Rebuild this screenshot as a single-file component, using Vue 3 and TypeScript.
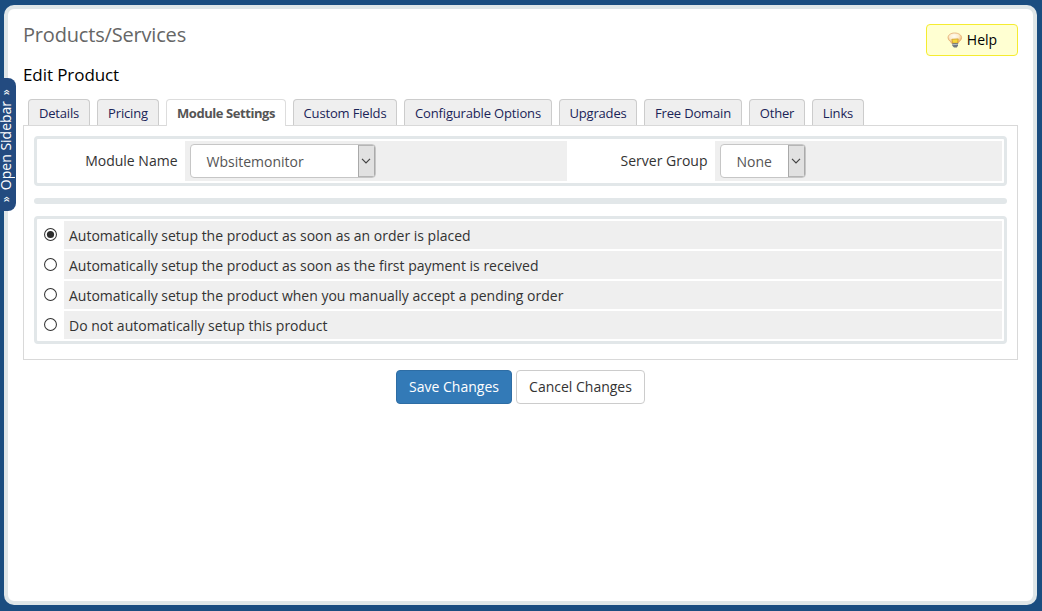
<script setup lang="ts">
import { ref } from 'vue'

interface Tab { label: string; width: number }

const tabs: Tab[] = [
  { label: 'Details', width: 62 },
  { label: 'Pricing', width: 62 },
  { label: 'Module Settings', width: 120 },
  { label: 'Custom Fields', width: 104 },
  { label: 'Configurable Options', width: 148 },
  { label: 'Upgrades', width: 78 },
  { label: 'Free Domain', width: 98 },
  { label: 'Other', width: 56 },
  { label: 'Links', width: 52 },
]
const activeTab = ref('Module Settings')

const setupOptions: string[] = [
  'Automatically setup the product as soon as an order is placed',
  'Automatically setup the product as soon as the first payment is received',
  'Automatically setup the product when you manually accept a pending order',
  'Do not automatically setup this product',
]
const selected = ref(0)
</script>

<template>
  <div class="page">
    <div class="sidebar-opener"><span class="opener-text"><i>»</i><em>Open Sidebar</em><i>»</i></span></div>
    <main class="content">
      <header class="head">
        <h1>Products/Services</h1>
        <button class="help" type="button">
          <svg width="16" height="16" viewBox="0 0 16 16">
            <defs>
              <radialGradient id="bulb" cx="0.45" cy="0.3" r="0.7">
                <stop offset="0" stop-color="#fffdf2" />
                <stop offset="0.5" stop-color="#fcebca" />
                <stop offset="1" stop-color="#e8a04a" />
              </radialGradient>
            </defs>
            <path d="M7.600 1C3.800 1 1 3 1 5.700c0 2.800 3 3.600 4 6h6c.6-2.400 3.600-3.200 3.600-6C14.600 3 11.600 1 7.600 1z" fill="url(#bulb)" stroke="#e3ad74" stroke-width=".8" />
            <path d="M4.800 7.300l6.400-.4-.6 4.300H5.800z" fill="#f5d93c" stroke="#cf9a2c" stroke-width=".8" />
            <path d="M5.300 11.300l5.700-.3v2.600L9.800 15.400H7L5.300 13.800z" fill="#6f777f" />
            <path d="M5.400 12.700l5.500-.4" stroke="#c9d0d6" stroke-width=".8" />
          </svg>
          <span>Help</span>
        </button>
      </header>
      <h2>Edit Product</h2>

      <nav class="tabs">
        <a
          v-for="tab in tabs"
          :key="tab.label"
          class="tab"
          :class="{ active: tab.label === activeTab }"
          :style="{ width: tab.width + 'px' }"
          @click="activeTab = tab.label"
        >{{ tab.label }}</a>
      </nav>

      <section class="panel">
        <div class="box module-row">
          <div class="label">Module Name</div>
          <div class="field">
            <div class="select wide">
              <span>Wbsitemonitor</span>
              <b><svg width="10" height="6" viewBox="0 0 10 6"><path d="M1 .8l4 4 4-4" /></svg></b>
            </div>
          </div>
          <div class="label">Server Group</div>
          <div class="field">
            <div class="select">
              <span>None</span>
              <b><svg width="10" height="6" viewBox="0 0 10 6"><path d="M1 .8l4 4 4-4" /></svg></b>
            </div>
          </div>
        </div>

        <div class="divider"></div>

        <div class="box options">
          <template v-for="(option, i) in setupOptions" :key="option">
            <div class="radio-cell" @click="selected = i">
              <svg width="13" height="13" viewBox="0 0 13 13">
                <circle cx="6.500" cy="6.500" r="5.950" fill="#fff" stroke="#333" stroke-width="1.050" />
                <circle v-if="selected === i" cx="6.500" cy="6.500" r="3.600" fill="#2b2b2b" />
              </svg>
            </div>
            <div class="option" @click="selected = i">{{ option }}</div>
          </template>
        </div>
      </section>

      <div class="actions">
        <button class="btn primary" type="button">Save Changes</button>
        <button class="btn" type="button">Cancel Changes</button>
      </div>
    </main>
  </div>
</template>

<style>
body {
  margin: 0;
  background: #1a4d80;
}
</style>

<style scoped>
.page {
  box-sizing: border-box;
  position: relative;
  height: 611px;
  padding: 5px 5px 6px 4px;
  background: #1a4d80;
  font-family: "Open Sans", "Noto Sans", sans-serif;
  font-size: 14px;
  color: #333;
}
.content {
  box-sizing: border-box;
  height: 600px;
  padding: 15px 15px 0;
  border: 4px solid #dfe6e8;
  border-radius: 10px;
  background: #fff;
}
.sidebar-opener {
  position: absolute;
  left: 0;
  top: 78px;
  width: 16px;
  height: 133px;
  border-radius: 0 8px 8px 0;
  background: #234b80;
  color: #fff;
  display: flex;
  justify-content: center;
  align-items: center;
}
.opener-text {
  display: flex;
  align-items: center;
  gap: 6px;
  writing-mode: vertical-rl;
  transform: rotate(180deg);
  white-space: nowrap;
  line-height: 16px;
  margin-right: 4px;
  margin-top: 2px;
}
.opener-text em {
  font-style: normal;
}
.opener-text i {
  font-style: normal;
  font-size: 12px;
  line-height: 12px;
}
.head {
  display: flex;
  justify-content: space-between;
  height: 40px;
}
h1 {
  margin: 0;
  font-size: 20px;
  font-weight: 400;
  line-height: 22px;
  letter-spacing: -0.180px;
  color: #666;
}
.help {
  box-sizing: border-box;
  width: 92px;
  height: 32px;
  padding: 0;
  border: 1px solid #f5ec30;
  border-radius: 4px;
  background: #ffffd2;
  font: inherit;
  color: #000;
  display: flex;
  align-items: center;
  justify-content: center;
  gap: 4px;
}
.help span {
  padding-bottom: 2px;
}
h2 {
  margin: 0;
  height: 35px;
  font-size: 17px;
  font-weight: 400;
  line-height: 22px;
  letter-spacing: -0.080px;
  color: #000;
}
.tabs {
  display: flex;
  gap: 7px;
  padding-left: 5px;
  height: 26px;
}
.tab {
  box-sizing: border-box;
  height: 26px;
  border: 1px solid #ccc;
  border-bottom: 0;
  border-radius: 4px 4px 0 0;
  background: #efefef;
  color: #1a2458;
  font-size: 13px;
  line-height: 27px;
  letter-spacing: -0.160px;
  text-align: center;
  white-space: nowrap;
}
.tab.active {
  position: relative;
  height: 27px;
  border-color: #ddd;
  background: #fff;
  color: #555;
  font-weight: 700;
  letter-spacing: -0.430px;
}
.panel {
  box-sizing: border-box;
  height: 235px;
  padding: 10px;
  border: 1px solid #d9d9d9;
}
.box {
  box-sizing: border-box;
  border: 3px solid #e2e7e9;
  border-radius: 4px;
  padding: 2px;
}
.module-row {
  display: grid;
  grid-template-columns: 146px 382px 148px 1fr;
  height: 50px;
}
.label {
  padding-right: 7.500px;
  text-align: right;
  line-height: 40px;
}
.field {
  display: flex;
  align-items: center;
  padding-left: 5px;
  background: #efefef;
}
.select {
  box-sizing: border-box;
  display: flex;
  justify-content: space-between;
  width: 86px;
  height: 34px;
  border: 1px solid #c6c6c6;
  border-radius: 4px;
  background: #fff;
  color: #555;
  overflow: hidden;
}
.select.wide {
  width: 186px;
}
.select span {
  padding-left: 15.500px;
  line-height: 33px;
}
.select b {
  box-sizing: border-box;
  width: 17px;
  padding: 0 2px 1px 0;
  border-left: 1px solid #a9a9a9;
  background: #e1e1e1;
  box-shadow: inset -1px 0 #aaa, inset 0 1px #b5b5b5, inset 0 -1px #b5b5b5;
  display: flex;
  align-items: center;
  justify-content: center;
}
.select path {
  fill: none;
  stroke: #444;
  stroke-width: 1.200;
}
.divider {
  height: 6px;
  margin: 12px 0;
  border-radius: 3px;
  background: #e2e7e9;
}
.options {
  display: grid;
  grid-template-columns: 23px 1fr;
  grid-template-rows: repeat(4, 28px);
  gap: 2px;
  height: 128px;
}
.radio-cell {
  padding: 7px 0 0 5px;
}
.radio-cell svg {
  display: block;
}
.option {
  padding-left: 5px;
  background: #efefef;
  line-height: 29px;
}
.actions {
  display: flex;
  justify-content: center;
  gap: 4px;
  padding-top: 10px;
}
.btn {
  box-sizing: border-box;
  width: 129px;
  height: 34px;
  padding: 0 0 2px;
  border: 1px solid #ccc;
  border-radius: 4px;
  background: #fff;
  font: inherit;
  color: #333;
}
.btn.primary {
  width: 116px;
  border-color: #2e6da4;
  background: #337ab7;
  color: #fff;
}
</style>
